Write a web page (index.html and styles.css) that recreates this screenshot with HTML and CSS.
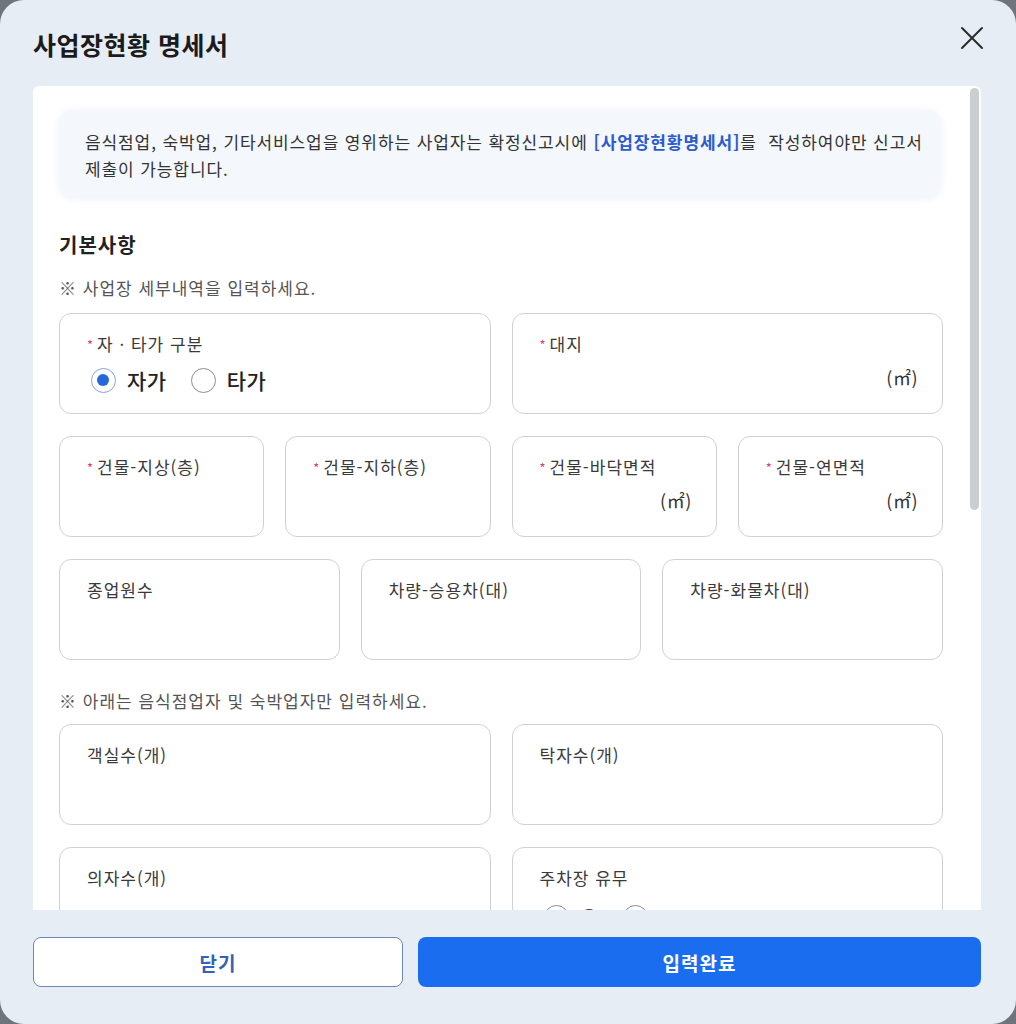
FILE: index.html
```html
<!DOCTYPE html>
<html lang="ko">
<head>
<meta charset="utf-8">
<title>사업장현황 명세서</title>
<link rel="stylesheet" href="styles.css">
</head>
<body>
<div class="modal">
  <header class="modal-head">
    <h1 class="modal-title">사업장현황 명세서</h1>
    <button class="close-btn" aria-label="닫기">
      <svg width="24" height="24" viewBox="0 0 24 24"><path d="M2 2 L22 22 M22 2 L2 22" stroke="#2b2b2b" stroke-width="2" fill="none" stroke-linecap="round"/></svg>
    </button>
  </header>
  <div class="panel">
    <div class="panel-inner">
      <div class="notice">음식점업, 숙박업, 기타서비스업을 영위하는 사업자는 확정신고시에 <b class="link">[사업장현황명세서]</b>를&nbsp; 작성하여야만 신고서<br>제출이 가능합니다.</div>

      <h2 class="section-title">기본사항</h2>
      <p class="hint">※ 사업장 세부내역을 입력하세요.</p>

      <div class="grid g2">
        <div class="card">
          <div class="label"><span class="req">*</span>자 · 타가 구분</div>
          <div class="radios">
            <label class="radio"><span class="dot on"></span>자가</label>
            <label class="radio"><span class="dot"></span>타가</label>
          </div>
        </div>
        <div class="card">
          <div class="label"><span class="req">*</span>대지</div>
          <div class="unit">(㎡)</div>
        </div>
      </div>

      <div class="grid g4">
        <div class="card"><div class="label"><span class="req">*</span>건물-지상(층)</div></div>
        <div class="card"><div class="label"><span class="req">*</span>건물-지하(층)</div></div>
        <div class="card"><div class="label"><span class="req">*</span>건물-바닥면적</div><div class="unit">(㎡)</div></div>
        <div class="card"><div class="label"><span class="req">*</span>건물-연면적</div><div class="unit">(㎡)</div></div>
      </div>

      <div class="grid g3">
        <div class="card"><div class="label">종업원수</div></div>
        <div class="card"><div class="label">차량-승용차(대)</div></div>
        <div class="card"><div class="label">차량-화물차(대)</div></div>
      </div>

      <p class="hint hint2">※ 아래는 음식점업자 및 숙박업자만 입력하세요.</p>

      <div class="grid g2">
        <div class="card"><div class="label">객실수(개)</div></div>
        <div class="card"><div class="label">탁자수(개)</div></div>
      </div>

      <div class="grid g2">
        <div class="card"><div class="label">의자수(개)</div></div>
        <div class="card">
          <div class="label">주차장 유무</div>
          <div class="radios small">
            <label class="radio"><span class="dot"></span>유</label>
            <label class="radio"><span class="dot"></span>무</label>
          </div>
        </div>
      </div>
    </div>
    <div class="scrollbar"><div class="thumb"></div></div>
  </div>
  <footer class="modal-foot">
    <button class="btn btn-outline">닫기</button>
    <button class="btn btn-primary">입력완료</button>
  </footer>
</div>
</body>
</html>
```

FILE: styles.css
```css
* { box-sizing: border-box; }
html, body { margin: 0; padding: 0; }
body {
  width: 1016px;
  height: 1024px;
  background: #6f747b;
  font-family: "Noto Sans CJK KR", "Noto Sans", sans-serif;
  color: #333;
  overflow: hidden;
}
.modal {
  width: 1016px;
  height: 1024px;
  background: #e7edf5;
  border-radius: 24px;
  overflow: hidden;
  display: flex;
  flex-direction: column;
}
.modal-head {
  height: 86px;
  display: flex;
  align-items: flex-start;
  justify-content: space-between;
  padding: 0 32px 0 33px;
}
.modal-title {
  margin: 27px 0 0;
  font-size: 25px;
  line-height: 34px;
  font-weight: 700;
  color: #1b1b1b;
  letter-spacing: 0.5px;
}
.close-btn {
  margin-top: 26px;
  border: 0;
  background: none;
  padding: 0;
  width: 24px;
  height: 24px;
  cursor: pointer;
}
.panel {
  position: relative;
  margin: 0 35px 0 33px;
  height: 824px;
  background: #fff;
  border-radius: 6px 6px 0 0;
  overflow: hidden;
}
.scrollbar {
  position: absolute;
  top: 2px;
  right: 2px;
  width: 9px;
  height: 422px;
}
.thumb {
  width: 100%;
  height: 100%;
  background: #cbced1;
  border-radius: 5px;
}
.panel-inner {
  padding: 24px 38px 40px 26px;
}
.notice {
  width: 882px;
  background: #f4f7fb;
  border-radius: 14px;
  box-shadow: 0 0 6px 2px #f4f7fb;
  padding: 18px 0 17px 26px;
  font-size: 17px;
  line-height: 27px;
  color: #333;
  white-space: nowrap;
  letter-spacing: 0.9px;
}
.notice .link { color: #2c5bd0; font-weight: 700; }
.section-title {
  margin: 32px 0 0;
  font-size: 20px;
  line-height: 28px;
  font-weight: 700;
  color: #222;
  letter-spacing: 1px;
}
.hint {
  margin: 17px 0 13px;
  font-size: 17px;
  line-height: 24px;
  color: #555;
  letter-spacing: 1px;
}
.hint2 { margin: 29px 0 11px; }
.grid {
  display: grid;
  gap: 21px;
  width: 884px;
  margin-bottom: 22px;
}
.g2 { grid-template-columns: 1fr 1fr; }
.g3 { grid-template-columns: 1fr 1fr 1fr; }
.g4 { grid-template-columns: 1fr 1fr 1fr 1fr; }
.card {
  height: 101px;
  border: 1px solid #cfd1d4;
  border-radius: 12px;
  padding: 18px 24px 0 27px;
  background: #fff;
}
.label {
  font-size: 17px;
  line-height: 24px;
  color: #3a3a3a;
  display: flex;
  align-items: center;
  letter-spacing: 1px;
}
.req {
  color: #d0456e;
  font-size: 13px;
  margin-right: 3px;
  position: relative;
  top: 1px;
}
.unit {
  text-align: right;
  font-size: 18px;
  line-height: 24px;
  color: #333;
  margin-top: 9px;
  letter-spacing: 0.5px;
}
.radios {
  display: flex;
  gap: 24px;
  margin-top: 9px;
  padding-left: 4px;
}
.radio {
  display: flex;
  align-items: center;
  gap: 11px;
  font-size: 21px;
  line-height: 30px;
  font-weight: 500;
  color: #222;
  letter-spacing: 0.5px;
}
.dot {
  width: 25px;
  height: 25px;
  border-radius: 50%;
  border: 1.5px solid #8a8d91;
  background: #fff;
  display: inline-block;
  position: relative;
}
.dot.on { border-color: #8aa4d6; }
.dot.on::after {
  content: "";
  position: absolute;
  left: 5px;
  top: 5px;
  width: 12px;
  height: 12px;
  border-radius: 50%;
  background: #2566de;
}
.radios.small { margin-top: 12px; }
.modal-foot {
  display: flex;
  gap: 15px;
  padding: 27px 35px 0 33px;
}
.btn {
  height: 50px;
  border-radius: 8px;
  font-family: inherit;
  font-size: 19px;
  font-weight: 700;
  letter-spacing: 1px;
  cursor: pointer;
}
.btn-outline {
  width: 370px;
  background: #fff;
  border: 1.5px solid #6d87bd;
  color: #3460b8;
}
.btn-primary {
  flex: 1;
  background: #1b6df0;
  border: 0;
  color: #fff;
}
```
